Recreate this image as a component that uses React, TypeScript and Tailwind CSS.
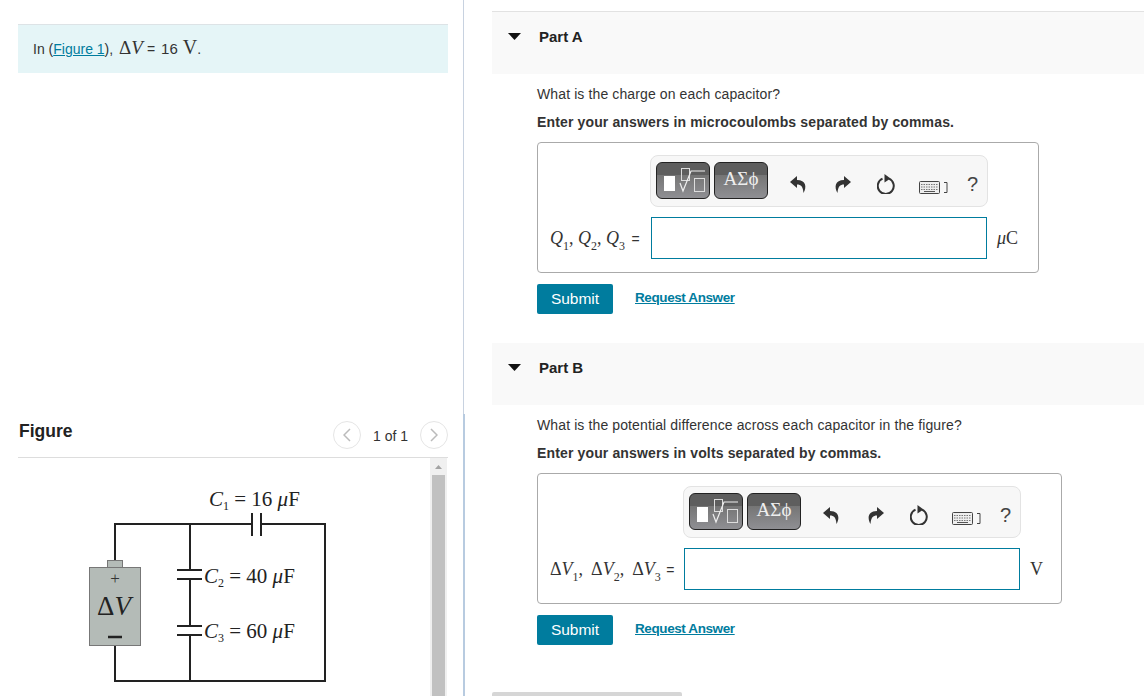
const sans = "font-['Liberation_Sans',Arial,sans-serif]";
const serif = "font-['Liberation_Serif',serif]";

const Toolbar = () => (
  <div className="flex h-[52px] w-[338px] items-center rounded-[8px] border border-[#e3e3e3] bg-[#f7f7f7] pl-[5px]">
    <div className="relative mb-[2px] h-[37px] w-[54px] overflow-hidden rounded-[6px] border border-[#222] bg-[linear-gradient(#5e5e5e_0,#5e5e5e_12px,#757575_12px,#8f8f93_100%)]">
      <svg className="absolute left-0 top-0" width="52" height="35" viewBox="0 0 52 35" fill="none">
        <rect x="7" y="13" width="11" height="15" fill="#fff" />
        <rect x="24.5" y="5.5" width="8" height="12" stroke="#ddd" />
        <path d="M23 20 L26 28 L34 8 H48" stroke="#eee" strokeWidth="1.2" />
        <rect x="37.5" y="15.5" width="10" height="13" stroke="#ddd" />
      </svg>
    </div>
    <div className={`mb-[2px] ml-[4px] flex h-[37px] w-[54px] items-start justify-center overflow-hidden rounded-[6px] border border-[#222] bg-[linear-gradient(#5e5e5e_0,#5e5e5e_12px,#757575_12px,#8f8f93_100%)] pt-[6px] ${serif} text-[19px] leading-[20px] text-[#eee]`}>
      ΑΣϕ
    </div>
    <svg className="ml-[22px] mt-[6px]" width="17" height="17" viewBox="0 0 17 17" fill="#333">
      <path d="M7 0 L0 6 L7 12 V8.5 C11 8.5 13 10.5 13.5 17 C17 11 16 4 7 4 Z" />
    </svg>
    <svg className="ml-[27px] mt-[6px]" width="17" height="17" viewBox="0 0 17 17" fill="#333">
      <path d="M10 0 L17 6 L10 12 V8.5 C6 8.5 4 10.5 3.5 17 C0 11 1 4 10 4 Z" />
    </svg>
    <svg className="ml-[26px] mt-[6px]" width="18" height="20" viewBox="0 0 18 20" fill="none">
      <path d="M5.5 4.6 A8 8 0 1 0 12 4.6" stroke="#333" strokeWidth="2" />
      <path d="M7.5 0 L13.5 4.5 L7.5 8.5 Z" fill="#333" />
    </svg>
    <svg className="ml-[24px] mt-[14px]" width="30" height="14" viewBox="0 0 30 14" fill="none">
      <rect x="0.5" y="0.5" width="20" height="12" rx="1" stroke="#444" fill="#eee" />
      <path d="M2 3.5 H19 M2 6 H19 M2 8.5 H19" stroke="#777" strokeDasharray="1.5 1" />
      <path d="M5 10.5 H16" stroke="#555" />
      <path d="M25 1.5 H28 V11.5 H25" stroke="#444" />
    </svg>
    <span className={`ml-[18px] mt-[6px] ${sans} text-[20px] text-[#444]`}>?</span>
  </div>
);

const Sub = ({ c }: { c: string }) => <sub className="align-[-3px] text-[12px] not-italic leading-none">{c}</sub>;

type PartProps = {
  title: string;
  question: string;
  hint: string;
  label: React.ReactNode;
  unit: React.ReactNode;
  boxW: string;
  barMl: string;
  labelW: string;
  gapAfter: string;
};

const Part = ({ title, question, hint, label, unit, boxW, barMl, labelW, gapAfter }: PartProps) => (
  <section>
    <div className={`flex h-[62px] items-start bg-[#f9f9f9] pl-[16px] pt-[16px] ${sans} text-[15px] font-bold leading-[18px] text-[#222]`}>
      <svg width="13" height="7" viewBox="0 0 13 7" className="mt-[5px]"><path d="M0 0 H13 L6.5 7 Z" fill="#111" /></svg>
      <span className="ml-[18px]">{title}</span>
    </div>
    <div className="pl-[45px] pt-[11px]">
      <p className={`${sans} text-[14px] leading-[18px] tracking-[0.115px] text-[#333]`}>{question}</p>
      <p className={`mt-[10px] ${sans} text-[14px] font-bold leading-[18px] tracking-[0.14px] text-[#333]`}>{hint}</p>
      <div className={`mt-[11px] h-[131px] ${boxW} rounded-[4px] border border-[#aaa] pt-[12px]`}>
        <div className={barMl}><Toolbar /></div>
        <div className="mt-[10px] flex items-center pl-[12px]">
          <div className={`${labelW} ${serif} text-[18px] text-[#333]`}>{label}</div>
          <div className="h-[42px] w-[336px] border border-[#007c9e]" />
          <div className={`ml-[10px] ${serif} text-[18px] text-[#333]`}>{unit}</div>
        </div>
      </div>
      <div className="mt-[11px] flex items-center">
        <div className={`flex h-[30px] w-[76px] items-center justify-center rounded-[2px] bg-[#007c9e] ${sans} text-[15.5px] text-white`}>Submit</div>
        <a className={`mb-[2px] ml-[22px] ${sans} text-[13.5px] font-bold tracking-[-0.4px] text-[#007c9e] underline`}>Request Answer</a>
      </div>
      <div className={gapAfter} />
    </div>
  </section>
);

const Circuit = () => (
  <svg width="330" height="238" viewBox="0 -22 330 238" fill="none" className={`shrink-0 ${serif}`}>
    <g stroke="#222" strokeWidth="2">
      <path d="M115 80 V44 H252 M261 44 H325 V201 H115 V165" />
      <path d="M190 44 V90 M190 99 V146 M190 155 V201" />
      <path d="M252 33 V56 M261 33 V56" />
      <path d="M177 90 H202 M177 99 H202 M177 146 H202 M177 155 H202" />
    </g>
    <rect x="89.5" y="87.5" width="51" height="78" fill="#b4bbb7" stroke="#777" />
    <rect x="107.5" y="80.5" width="15" height="7" fill="#b4bbb7" stroke="#777" />
    <text x="115" y="104" textAnchor="middle" fontSize="17" fill="#333">+</text>
    <text x="114" y="135" textAnchor="middle" fontSize="27" fill="#222">Δ<tspan fontStyle="italic">V</tspan></text>
    <path d="M108 157 H122" stroke="#222" strokeWidth="2.5" />
    <g fontSize="21" fill="#222">
      <text x="209" y="26"><tspan fontStyle="italic">C</tspan><tspan fontSize="12" dy="4">1</tspan><tspan dy="-4"> = 16 </tspan><tspan fontStyle="italic">μ</tspan>F</text>
      <text x="204" y="103"><tspan fontStyle="italic">C</tspan><tspan fontSize="12" dy="4">2</tspan><tspan dy="-4"> = 40 </tspan><tspan fontStyle="italic">μ</tspan>F</text>
      <text x="204" y="158"><tspan fontStyle="italic">C</tspan><tspan fontSize="12" dy="4">3</tspan><tspan dy="-4"> = 60 </tspan><tspan fontStyle="italic">μ</tspan>F</text>
    </g>
  </svg>
);

export default function App() {
  return (
    <div className="flex h-[696px] w-[1144px] overflow-hidden bg-white">
      <div className="h-full w-[465px] shrink-0">
        <div className="h-[414px] w-[464px] border-r border-[#c8d2e0] pl-[18px] pt-[24px]">
          <div className={`flex h-[49px] w-[430px] items-center border-t border-[#dde3e6] bg-[#e5f5f7] pl-[15px] ${sans} text-[14px] text-[#333]`}>
            <span className="-mt-[3px]">
              In (<a className="text-[#007c9e] underline">Figure 1</a>),{" "}
              <span className={`${serif} ml-[2px] text-[19px]`}>Δ<i>V</i></span>
              <span className="ml-[4px]">=</span>
              <span className="ml-[6px] text-[15px]">16</span>
              <span className={`${serif} ml-[5px] text-[20px]`}>V</span>.
            </span>
          </div>
        </div>
        <div className="h-[282px] w-[465px] border-r-2 border-[#b8cbe0] pl-[18px] pt-[6px]">
          <div className="flex h-[38px] w-[430px] items-start justify-between border-b border-[#ddd]">
            <span className={`-mt-[1px] ml-[1px] ${sans} text-[17.5px] font-bold leading-[24px] text-[#222]`}>Figure</span>
            <div className={`mt-[1px] flex items-center ${sans} text-[14px] text-[#333]`}>
              <div className="flex h-[28px] w-[28px] items-center justify-center rounded-full border border-[#e5e5e5]">
                <svg width="8" height="14" viewBox="0 0 8 14" fill="none"><path d="M7 1 L1 7 L7 13" stroke="#bbb" strokeWidth="1.5" /></svg>
              </div>
              <span className="mx-[12px] mt-[2px]">1 of 1</span>
              <div className="flex h-[28px] w-[28px] items-center justify-center rounded-full border border-[#e5e5e5]">
                <svg width="8" height="14" viewBox="0 0 8 14" fill="none"><path d="M1 1 L7 7 L1 13" stroke="#bbb" strokeWidth="1.5" /></svg>
              </div>
            </div>
          </div>
          <div className="-ml-[18px] flex h-[238px] w-[447px]">
            <Circuit />
            <div className="ml-[100px] w-[17px] shrink-0 bg-[#f0f0f0]">
              <svg width="17" height="17" viewBox="0 0 17 17"><path d="M5 11 H12 L8.5 7 Z" fill="#a3a3a3" /></svg>
              <div className="mx-auto h-[221px] w-[13px] bg-[#c1c1c1]" />
            </div>
          </div>
        </div>
      </div>
      <div className="min-w-0 flex-1 pl-[27px] pt-[11px]">
        <div className="h-px bg-[#e2e2e2]" />
        <Part
          title="Part A"
          question="What is the charge on each capacitor?"
          hint="Enter your answers in microcoulombs separated by commas."
          label={<span><i>Q</i><Sub c="1" />, <i>Q</i><Sub c="2" />, <i>Q</i><Sub c="3" /> <span className={`${sans} ml-[2px] text-[14px]`}>=</span></span>}
          unit={<span><i>μ</i>C</span>}
          boxW="w-[502px]"
          barMl="ml-[112px]"
          labelW="w-[101px]"
          gapAfter="h-[29px]"
        />
        <Part
          title="Part B"
          question="What is the potential difference across each capacitor in the figure?"
          hint="Enter your answers in volts separated by commas."
          label={<span>Δ<i>V</i><Sub c="1" /><span className="mr-[3.5px]">,</span> Δ<i>V</i><Sub c="2" /><span className="mr-[3.5px]">,</span> Δ<i>V</i><Sub c="3" /> <span className={`${sans} ml-[1px] text-[14px]`}>=</span></span>}
          unit="V"
          boxW="w-[525px]"
          barMl="ml-[145px]"
          labelW="w-[134px]"
          gapAfter="h-[47px]"
        />
        <div className="h-[10px] w-[190px] rounded-t-[2px] bg-[#d6d6d6]" />
      </div>
    </div>
  );
}
